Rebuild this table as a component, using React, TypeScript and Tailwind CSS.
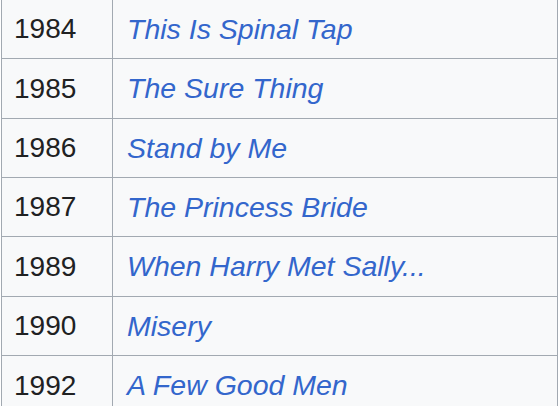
const FILMS = [
  { year: "1984", title: "This Is Spinal Tap", h: "h-[59px]" },
  { year: "1985", title: "The Sure Thing", h: "h-[60px]" },
  { year: "1986", title: "Stand by Me", h: "h-[59px]" },
  { year: "1987", title: "The Princess Bride", h: "h-[59px]" },
  { year: "1989", title: "When Harry Met Sally...", h: "h-[60px]" },
  { year: "1990", title: "Misery", h: "h-[59px]" },
  { year: "1992", title: "A Few Good Men", h: "h-[60px]" },
];

export default function App() {
  return (
    <div className="w-[558px] h-[406px] overflow-hidden bg-white font-['Liberation_Sans',Arial,sans-serif]">
      <div className="ml-px w-[557px] bg-[#f8f9fa] border-x border-[#a2a9b1] text-[28px] leading-none text-[#202122]">
        {FILMS.map((f) => (
          <div key={f.year} className={`flex border-b border-[#a2a9b1] ${f.h}`}>
            <div className="w-[111px] shrink-0 flex items-center pl-[12px] border-r border-[#a2a9b1]">
              {f.year}
            </div>
            <div className="flex-1 flex items-center pl-[14px]">
              <a href="#" className="italic text-[28.5px] text-[#3366cc]">
                {f.title}
              </a>
            </div>
          </div>
        ))}
      </div>
    </div>
  );
}
